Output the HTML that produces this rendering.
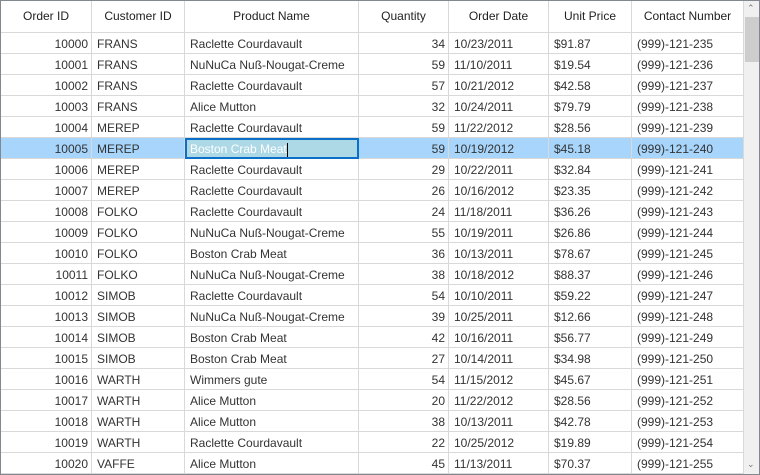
<!DOCTYPE html>
<html><head><meta charset="utf-8"><style>
body{margin:0;background:#fff;}
#g{position:absolute;left:0;top:0;width:758px;height:473px;border:1px solid #828790;overflow:hidden;font-family:"Liberation Sans",sans-serif;font-size:12px;color:#333;}
.r{position:relative;height:21px;box-sizing:border-box;border-bottom:1px solid #d9d9d9;white-space:nowrap;}
.h{height:32px;color:#222;}
.c{position:absolute;top:0;height:100%;box-sizing:border-box;border-right:1px solid #d9d9d9;line-height:22px;padding:0 5px;overflow:hidden;}
.h .c{line-height:31px;text-align:center;}
.a{left:0;width:91px;text-align:right;padding-right:3px}
.b{left:91px;width:93px}
.p{left:184px;width:174px}
.q{left:358px;width:90px;text-align:right;padding-right:3px}
.d{left:448px;width:100px}
.u{left:548px;width:83px}
.n{left:631px;width:112px}
.sel{background:#a8d5fb}
.ed{position:absolute;left:184px;top:0;width:174px;height:21px;box-sizing:border-box;border:2px solid #0a6fc9;background:#add8e6;color:#fff;line-height:18px;padding-left:3px}
.ed i{display:inline-block;width:1px;height:14px;background:#000;vertical-align:middle}
#sb{position:absolute;left:743px;top:0;width:15px;height:473px;background:#f0f0f0;}
#th{position:absolute;left:1px;top:16px;width:14px;height:45px;background:#cdcdcd}
.ar{position:absolute;left:3px;color:#777;font-size:9px}
</style></head><body><div id="g">
<div class="r h"><div class="c a" style="text-align:center;padding:0">Order ID</div><div class="c b">Customer ID</div><div class="c p">Product Name</div><div class="c q" style="text-align:center;padding:0">Quantity</div><div class="c d">Order Date</div><div class="c u">Unit Price</div><div class="c n">Contact Number</div></div>
<div class="r"><div class="c a">10000</div><div class="c b">FRANS</div><div class="c p">Raclette Courdavault</div><div class="c q">34</div><div class="c d">10/23/2011</div><div class="c u">$91.87</div><div class="c n">(999)-121-235</div></div>
<div class="r"><div class="c a">10001</div><div class="c b">FRANS</div><div class="c p">NuNuCa Nuß-Nougat-Creme</div><div class="c q">59</div><div class="c d">11/10/2011</div><div class="c u">$19.54</div><div class="c n">(999)-121-236</div></div>
<div class="r"><div class="c a">10002</div><div class="c b">FRANS</div><div class="c p">Raclette Courdavault</div><div class="c q">57</div><div class="c d">10/21/2012</div><div class="c u">$42.58</div><div class="c n">(999)-121-237</div></div>
<div class="r"><div class="c a">10003</div><div class="c b">FRANS</div><div class="c p">Alice Mutton</div><div class="c q">32</div><div class="c d">10/24/2011</div><div class="c u">$79.79</div><div class="c n">(999)-121-238</div></div>
<div class="r"><div class="c a">10004</div><div class="c b">MEREP</div><div class="c p">Raclette Courdavault</div><div class="c q">59</div><div class="c d">11/22/2012</div><div class="c u">$28.56</div><div class="c n">(999)-121-239</div></div>
<div class="r sel"><div class="c a">10005</div><div class="c b">MEREP</div><div class="ed">Boston Crab Meat<i></i></div><div class="c q">59</div><div class="c d">10/19/2012</div><div class="c u">$45.18</div><div class="c n">(999)-121-240</div></div>
<div class="r"><div class="c a">10006</div><div class="c b">MEREP</div><div class="c p">Raclette Courdavault</div><div class="c q">29</div><div class="c d">10/22/2011</div><div class="c u">$32.84</div><div class="c n">(999)-121-241</div></div>
<div class="r"><div class="c a">10007</div><div class="c b">MEREP</div><div class="c p">Raclette Courdavault</div><div class="c q">26</div><div class="c d">10/16/2012</div><div class="c u">$23.35</div><div class="c n">(999)-121-242</div></div>
<div class="r"><div class="c a">10008</div><div class="c b">FOLKO</div><div class="c p">Raclette Courdavault</div><div class="c q">24</div><div class="c d">11/18/2011</div><div class="c u">$36.26</div><div class="c n">(999)-121-243</div></div>
<div class="r"><div class="c a">10009</div><div class="c b">FOLKO</div><div class="c p">NuNuCa Nuß-Nougat-Creme</div><div class="c q">55</div><div class="c d">10/19/2011</div><div class="c u">$26.86</div><div class="c n">(999)-121-244</div></div>
<div class="r"><div class="c a">10010</div><div class="c b">FOLKO</div><div class="c p">Boston Crab Meat</div><div class="c q">36</div><div class="c d">10/13/2011</div><div class="c u">$78.67</div><div class="c n">(999)-121-245</div></div>
<div class="r"><div class="c a">10011</div><div class="c b">FOLKO</div><div class="c p">NuNuCa Nuß-Nougat-Creme</div><div class="c q">38</div><div class="c d">10/18/2012</div><div class="c u">$88.37</div><div class="c n">(999)-121-246</div></div>
<div class="r"><div class="c a">10012</div><div class="c b">SIMOB</div><div class="c p">Raclette Courdavault</div><div class="c q">54</div><div class="c d">10/10/2011</div><div class="c u">$59.22</div><div class="c n">(999)-121-247</div></div>
<div class="r"><div class="c a">10013</div><div class="c b">SIMOB</div><div class="c p">NuNuCa Nuß-Nougat-Creme</div><div class="c q">39</div><div class="c d">10/25/2011</div><div class="c u">$12.66</div><div class="c n">(999)-121-248</div></div>
<div class="r"><div class="c a">10014</div><div class="c b">SIMOB</div><div class="c p">Boston Crab Meat</div><div class="c q">42</div><div class="c d">10/16/2011</div><div class="c u">$56.77</div><div class="c n">(999)-121-249</div></div>
<div class="r"><div class="c a">10015</div><div class="c b">SIMOB</div><div class="c p">Boston Crab Meat</div><div class="c q">27</div><div class="c d">10/14/2011</div><div class="c u">$34.98</div><div class="c n">(999)-121-250</div></div>
<div class="r"><div class="c a">10016</div><div class="c b">WARTH</div><div class="c p">Wimmers gute</div><div class="c q">54</div><div class="c d">11/15/2012</div><div class="c u">$45.67</div><div class="c n">(999)-121-251</div></div>
<div class="r"><div class="c a">10017</div><div class="c b">WARTH</div><div class="c p">Alice Mutton</div><div class="c q">20</div><div class="c d">11/22/2012</div><div class="c u">$28.56</div><div class="c n">(999)-121-252</div></div>
<div class="r"><div class="c a">10018</div><div class="c b">WARTH</div><div class="c p">Alice Mutton</div><div class="c q">38</div><div class="c d">10/13/2011</div><div class="c u">$42.78</div><div class="c n">(999)-121-253</div></div>
<div class="r"><div class="c a">10019</div><div class="c b">WARTH</div><div class="c p">Raclette Courdavault</div><div class="c q">22</div><div class="c d">10/25/2012</div><div class="c u">$19.89</div><div class="c n">(999)-121-254</div></div>
<div class="r"><div class="c a">10020</div><div class="c b">VAFFE</div><div class="c p">Alice Mutton</div><div class="c q">45</div><div class="c d">11/13/2011</div><div class="c u">$70.37</div><div class="c n">(999)-121-255</div></div>
<div id="sb"><div class="ar" style="top:2px">&#8963;</div><div id="th"></div><div class="ar" style="top:458px">&#8964;</div></div>
</div></body></html>
